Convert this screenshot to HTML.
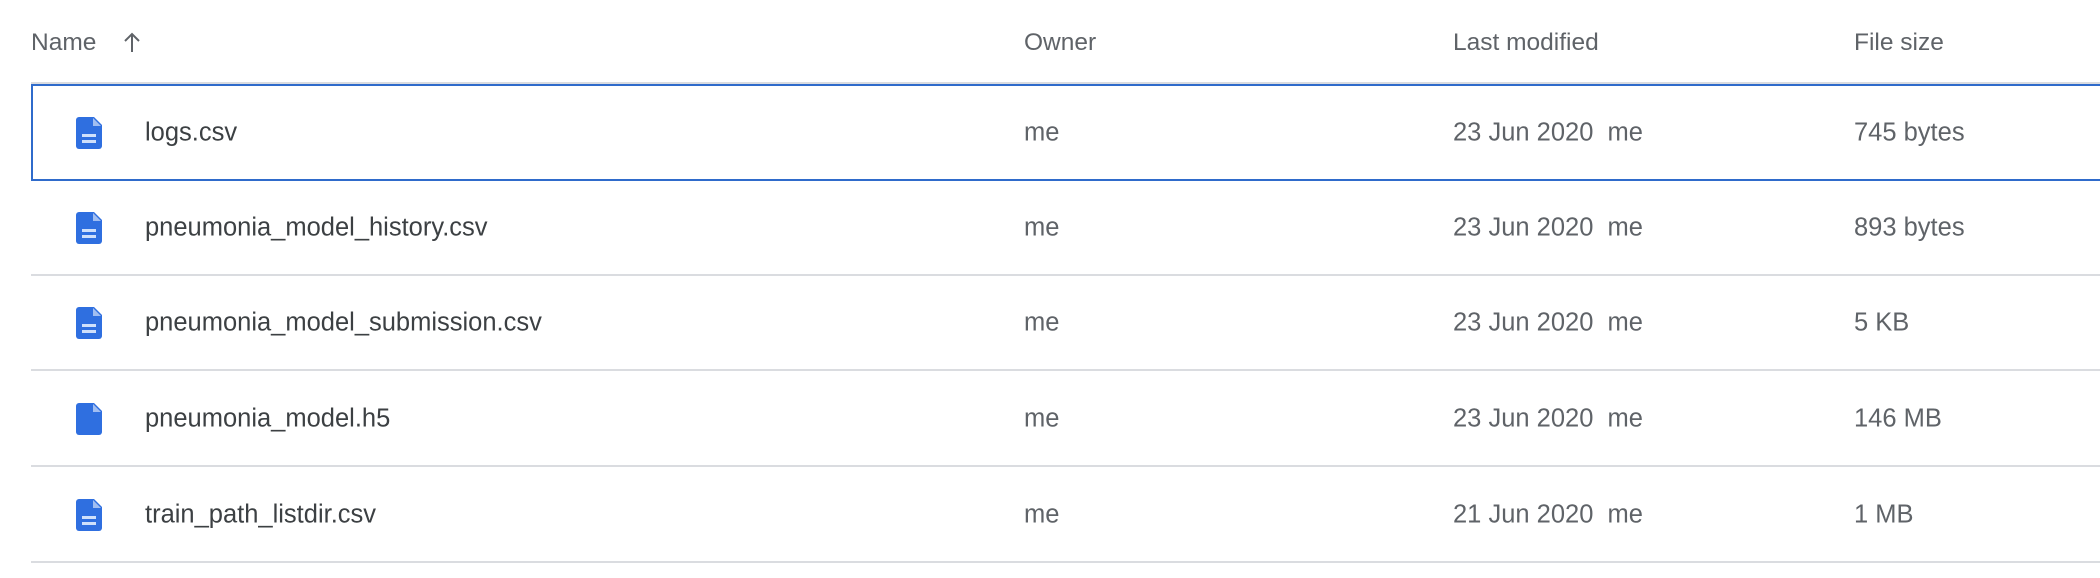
<!DOCTYPE html>
<html><head><style>
body{margin:0;width:2100px;height:578px;background:#fff;font-family:"Liberation Sans",Arial,sans-serif;overflow:hidden;position:relative}
.h{position:absolute;top:29px;font-size:24.5px;color:#5f6368;font-weight:normal}
.hl{position:absolute;left:31px;right:0;top:82px;height:2px;background:#dadce0}
.row{position:absolute;left:31px;right:0;height:95px;border-bottom:2px solid #dadce0;box-sizing:border-box}
.sel{border:2px solid #2f6bcb;border-right:none}
.t{position:absolute;top:50%;transform:translateY(-50%);font-size:25.5px;color:#5f6368;white-space:nowrap}
.n{left:114px;color:#3c4043}
.ic{position:absolute;left:45px;top:50%;margin-top:-16px}
</style></head><body>
<div class="h" style="left:31px">Name</div>
<svg style="position:absolute;left:123px;top:31px" width="18" height="22" viewBox="0 0 18 22"><path d="M9 21V3M2 10l7-7 7 7" fill="none" stroke="#5f6368" stroke-width="2"/></svg>
<div class="h" style="left:1024px">Owner</div>
<div class="h" style="left:1453px">Last modified</div>
<div class="h" style="left:1854px">File size</div>
<div class="hl"></div>

<div class="row sel" style="top:84px;height:97px"><svg class="ic" width="26" height="32" viewBox="0 0 26 32" style="left:43px"><path d="M3 0h15l8 8v21a3 3 0 0 1-3 3H3a3 3 0 0 1-3-3V3a3 3 0 0 1 3-3z" fill="#2f6fe0"/><path d="M17 1v8h8" fill="#fff" opacity=".55"/><rect x="6" y="17" width="14" height="3" fill="#cfe0fb"/><rect x="6" y="23" width="14" height="3" fill="#cfe0fb"/></svg><div class="t n" style="left:112px">logs.csv</div><div class="t" style="left:991px">me</div><div class="t" style="left:1420px">23 Jun 2020&nbsp; me</div><div class="t" style="left:1821px">745 bytes</div></div>

<div class="row" style="top:181px"><svg class="ic" width="26" height="32" viewBox="0 0 26 32"><path d="M3 0h15l8 8v21a3 3 0 0 1-3 3H3a3 3 0 0 1-3-3V3a3 3 0 0 1 3-3z" fill="#2f6fe0"/><path d="M17 1v8h8" fill="#fff" opacity=".55"/><rect x="6" y="17" width="14" height="3" fill="#cfe0fb"/><rect x="6" y="23" width="14" height="3" fill="#cfe0fb"/></svg><div class="t n">pneumonia_model_history.csv</div><div class="t" style="left:993px">me</div><div class="t" style="left:1422px">23 Jun 2020&nbsp; me</div><div class="t" style="left:1823px">893 bytes</div></div>

<div class="row" style="top:276px"><svg class="ic" width="26" height="32" viewBox="0 0 26 32"><path d="M3 0h15l8 8v21a3 3 0 0 1-3 3H3a3 3 0 0 1-3-3V3a3 3 0 0 1 3-3z" fill="#2f6fe0"/><path d="M17 1v8h8" fill="#fff" opacity=".55"/><rect x="6" y="17" width="14" height="3" fill="#cfe0fb"/><rect x="6" y="23" width="14" height="3" fill="#cfe0fb"/></svg><div class="t n">pneumonia_model_submission.csv</div><div class="t" style="left:993px">me</div><div class="t" style="left:1422px">23 Jun 2020&nbsp; me</div><div class="t" style="left:1823px">5 KB</div></div>

<div class="row" style="top:372px"><svg class="ic" width="26" height="32" viewBox="0 0 26 32"><path d="M3 0h15l8 8v21a3 3 0 0 1-3 3H3a3 3 0 0 1-3-3V3a3 3 0 0 1 3-3z" fill="#2f6fe0"/><path d="M17 1v8h8" fill="#fff" opacity=".55"/></svg><div class="t n">pneumonia_model.h5</div><div class="t" style="left:993px">me</div><div class="t" style="left:1422px">23 Jun 2020&nbsp; me</div><div class="t" style="left:1823px">146 MB</div></div>

<div class="row" style="top:468px"><svg class="ic" width="26" height="32" viewBox="0 0 26 32"><path d="M3 0h15l8 8v21a3 3 0 0 1-3 3H3a3 3 0 0 1-3-3V3a3 3 0 0 1 3-3z" fill="#2f6fe0"/><path d="M17 1v8h8" fill="#fff" opacity=".55"/><rect x="6" y="17" width="14" height="3" fill="#cfe0fb"/><rect x="6" y="23" width="14" height="3" fill="#cfe0fb"/></svg><div class="t n">train_path_listdir.csv</div><div class="t" style="left:993px">me</div><div class="t" style="left:1422px">21 Jun 2020&nbsp; me</div><div class="t" style="left:1823px">1 MB</div></div>
</body></html>
